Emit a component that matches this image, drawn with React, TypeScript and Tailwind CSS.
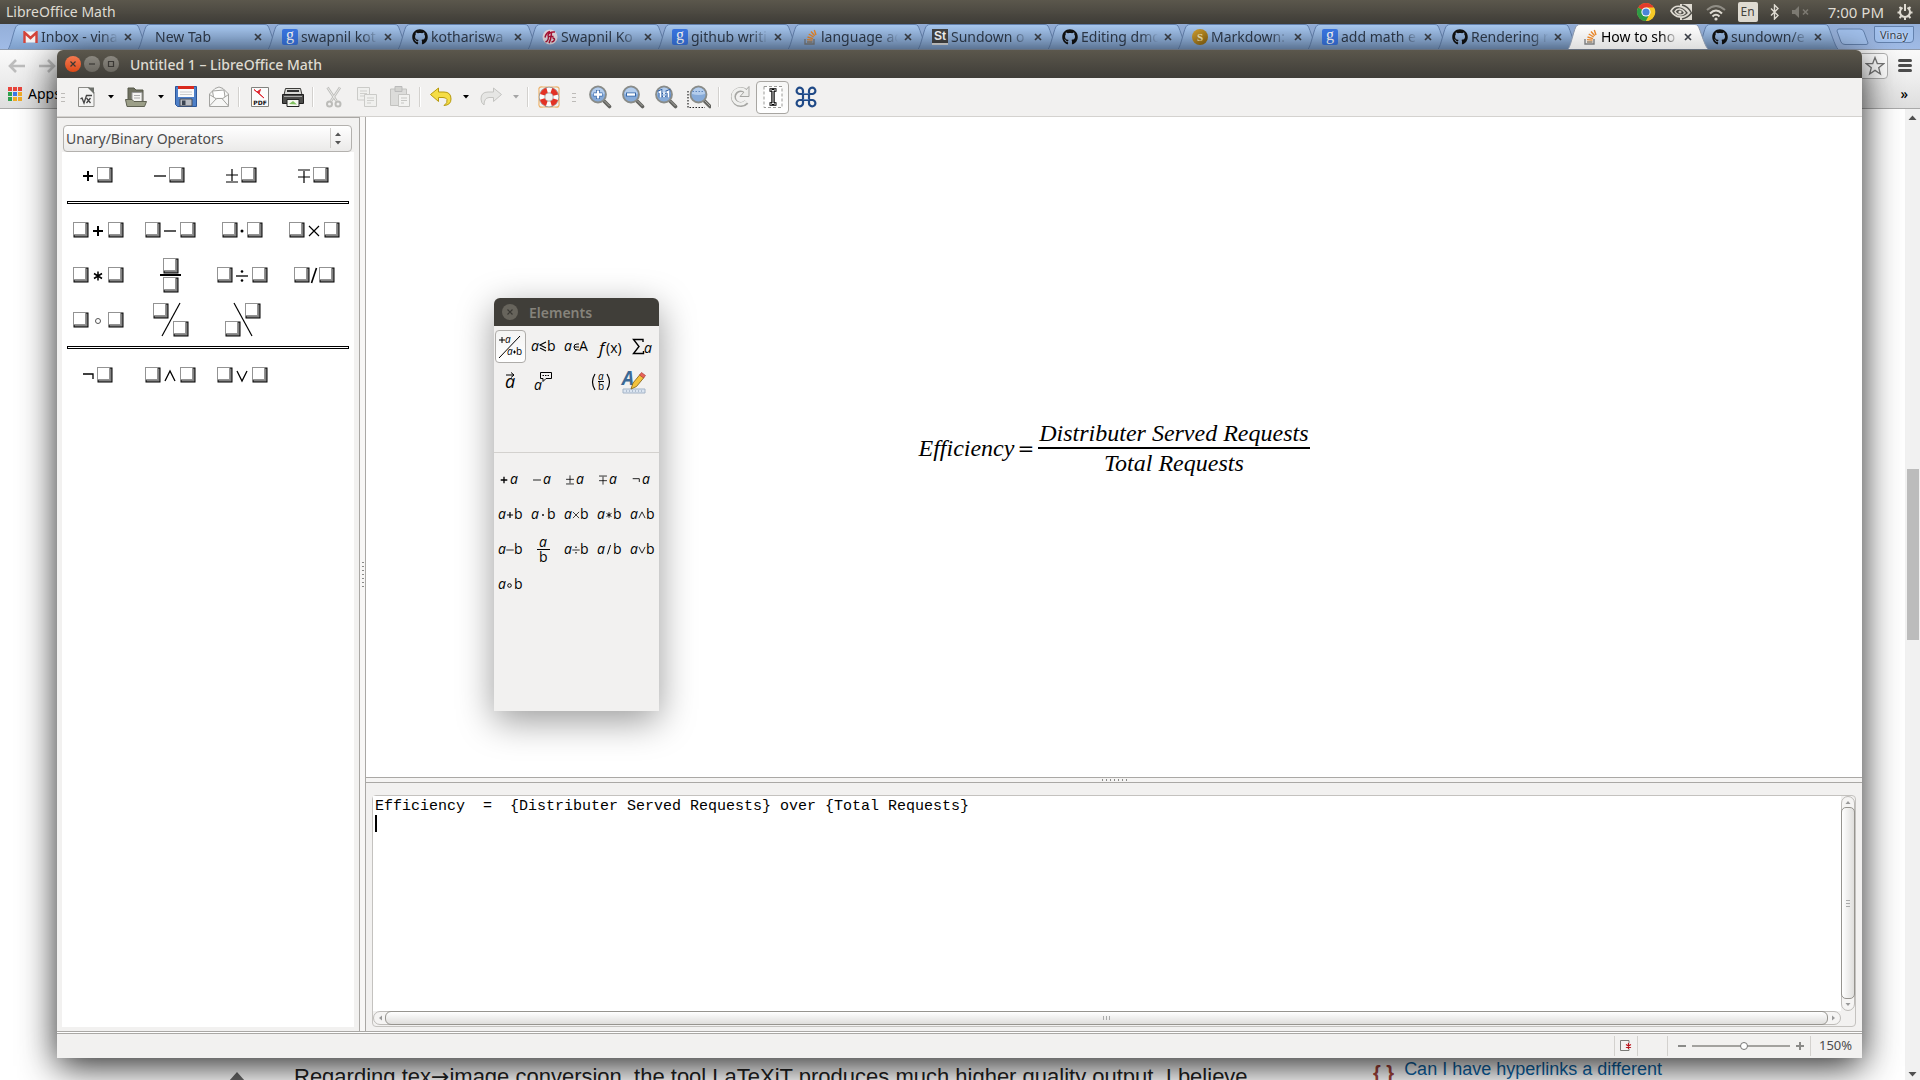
import React from "react";
import { FaGithub } from "react-icons/fa";

const UI = "font-['Noto_Sans',sans-serif]";

/* ---------- desktop panel ---------- */

function ChromeIcon() {
  return (
    <svg width="20" height="20" viewBox="0 0 20 20">
      <circle cx="10" cy="10" r="9" fill="#f7c927" />
      <path d="M10 10 L2.2 5.5 A9 9 0 0 1 17.8 5.5 Z" fill="#e23a2c" />
      <path d="M10 10 L2.2 5.5 A9 9 0 0 0 10 19 L13.5 12.5 Z" fill="#2d9b46" />
      <path d="M10 5.5 L18 5.5 A9 9 0 0 1 10 19 L14 12 Z" fill="#f7c927" />
      <circle cx="10" cy="10" r="4.6" fill="#fff" />
      <circle cx="10" cy="10" r="3.6" fill="#4a84d8" />
    </svg>
  );
}

function NvidiaIcon() {
  return (
    <svg width="24" height="20" viewBox="0 0 24 20" fill="none" stroke="#dfdbd2">
      <path d="M10 2 H22 V18 H10 Z" fill="#dfdbd2" stroke="none" />
      <path d="M1 9 C5 2 13 3 19 11 C14 17 5 16 1 9 Z" fill="#504f49" strokeWidth="1.6" />
      <path d="M12 3 C17 4 20 8 21.500 11 C19 14 16 16 12 17" stroke="#504f49" strokeWidth="1.4" />
      <path d="M5 9.500 C7 6 12 6 15 11 C12 14 7 14 5 9.500 Z" strokeWidth="1.5" />
      <circle cx="10" cy="10" r="1.6" fill="#dfdbd2" stroke="none" />
    </svg>
  );
}

function TopPanel() {
  return (
    <header
      className={`${UI} flex h-6 shrink-0 items-center bg-linear-to-b from-[#5b574c] to-[#3f3d38] px-1.5 text-[14px] leading-6 text-[#dfdbd2]`}
    >
      <span>LibreOffice Math</span>
      <div className="ml-auto flex items-center">
        <button aria-label="Chrome" className="mr-3.5"><ChromeIcon /></button>
        <button aria-label="Graphics" className="mr-3"><NvidiaIcon /></button>
        <button aria-label="Network" className="mr-3">
          <svg width="20" height="18" viewBox="0 0 20 18" fill="none" strokeWidth="2">
            <path d="M1 7 Q10 -1 19 7" stroke="#908d85" />
            <path d="M4 10.500 Q10 4.500 16 10.500" stroke="#dfdbd2" />
            <path d="M6.500 13.500 Q10 10 13.500 13.500" stroke="#dfdbd2" />
            <circle cx="10" cy="16" r="1.600" fill="#dfdbd2" />
          </svg>
        </button>
        <button className="mr-3 h-5 w-5 rounded-xs bg-[#dfdbd2] text-center text-[12px] leading-5 text-[#45433e]">En</button>
        <button aria-label="Bluetooth" className="mr-3">
          <svg width="9" height="16" viewBox="0 0 9 16" fill="none" stroke="#dfdbd2" strokeWidth="1.400">
            <path d="M1 4.500 L8 11.500 L4.500 15 V1 L8 4.500 L1 11.500" />
          </svg>
        </button>
        <button aria-label="Volume" className="mr-[18px]">
          <svg width="19" height="12" viewBox="0 0 19 12">
            <path d="M1 4 H4 L8 0 V12 L4 8 H1 Z" fill="#7d7a72" />
            <path d="M12 3.500 L17 8.500 M17 3.500 L12 8.500" stroke="#7d7a72" strokeWidth="1.600" />
          </svg>
        </button>
        <span className="mr-3 text-[15px]">7:00 PM</span>
        <button aria-label="Session">
          <svg width="18" height="18" viewBox="0 0 18 18" fill="none" stroke="#dfdbd2" strokeWidth="2">
            <path d="M6.500 4.700 A5 5 0 1 0 11.500 4.700" />
            <path d="M9 1 V8" />
            <path d="M1.500 9.500 H4 M14 9.500 H16.500 M3.500 15 L5.500 13 M14.500 15 L12.500 13 M9 14.500 V17 M3.500 4 L5.500 6 M14.500 4 L12.500 6" />
          </svg>
        </button>
      </div>
    </header>
  );
}

/* ---------- browser behind ---------- */

function GoogleIcon() {
  return (
    <span className="flex h-4 w-4 items-center justify-center rounded-xs bg-[#3b78e7] pb-1 font-['Liberation_Serif',serif] text-[16px] leading-4 text-white">
      g
    </span>
  );
}
function SoIcon() {
  return (
    <svg width="15" height="16" viewBox="0 0 15 16" fill="none">
      <path d="M2 10 V15 H11 V10" stroke="#7b7c7e" strokeWidth="1.400" />
      <path d="M4 13 H9.500" stroke="#8d7a62" strokeWidth="1.400" />
      <path d="M4 10.600 L9.500 11.100 M4.500 8 L10 9.600 M5.700 5 L10.700 8 M8 2.500 L11.700 6.800 M11.300 1 L13 6" stroke="#e8872b" strokeWidth="1.400" />
    </svg>
  );
}
const favicons: Record<string, React.ReactNode> = {
  gmail: (
    <svg width="15" height="12" viewBox="0 0 15 12">
      <rect x="1" y="0.500" width="13" height="11" fill="#f4f4f4" />
      <path d="M1.500 12 V1.500 L7.500 7 L13.500 1.500 V12" fill="none" stroke="#d5443a" strokeWidth="2.400" />
    </svg>
  ),
  google: <GoogleIcon />,
  github: <FaGithub size={16} color="#111" />,
  so: <SoIcon />,
  sk: (
    <svg width="16" height="16" viewBox="0 0 16 16">
      <circle cx="8" cy="8" r="7.500" fill="#e9dfe6" />
      <path d="M3.500 13 C6 12 7 9 6 6 C7 3.500 9 2.500 13 3 M3 8.500 C4 4 6 3 8 2.500 M6.500 7.500 H11.500 M9.500 4 C9 8 9 11 7 14 M10.500 9 C13.500 9 13 12.500 9.500 13" fill="none" stroke="#b01236" strokeWidth="1.500" />
    </svg>
  ),
  st: (
    <span className="flex h-4 w-4 items-center justify-center border-b-2 border-[#ddd] bg-[#444] font-['Liberation_Sans',sans-serif] text-[12px] leading-3 font-bold text-white">
      St
    </span>
  ),
  s: (
    <span className="flex h-4 w-4 items-center justify-center rounded-full bg-linear-to-br from-[#d8a531] to-[#8a6410] font-['Liberation_Serif',serif] text-[11px] leading-4 font-bold text-[#f6e6b5]">
      S
    </span>
  ),
};

const tabs = [
  ["gmail", "Inbox - vina"],
  ["", "New Tab"],
  ["google", "swapnil kot"],
  ["github", "kothariswa"],
  ["sk", "Swapnil Ko"],
  ["google", "github writi"],
  ["so", "language ac"],
  ["st", "Sundown o"],
  ["github", "Editing dmq"],
  ["s", "Markdown:"],
  ["google", "add math e"],
  ["github", "Rendering r"],
  ["so", "How to sho"],
  ["github", "sundown/e"],
];

function Tab({ icon, label, active }: { icon: string; label: string; active: boolean }) {
  return (
    <div className={active ? "relative z-10 -mr-2.5 h-[25px] w-[140px] shrink-0" : "relative -mr-2.5 h-[25px] w-[140px] shrink-0"}>
      <svg className="absolute inset-0" width="140" height="25" viewBox="0 0 140 25">
        <defs>
          <linearGradient id="tabIdle" x1="0" y1="0" x2="0" y2="1">
            <stop offset="0" stopColor="#abcbf3" />
            <stop offset="1" stopColor="#7e9fca" />
          </linearGradient>
          <linearGradient id="tabActive" x1="0" y1="0" x2="0" y2="1">
            <stop offset="0" stopColor="#ffffff" />
            <stop offset="1" stopColor="#dedede" />
          </linearGradient>
        </defs>
        <path
          d="M0 25 C3 23 6 3 9 1.500 Q10 0.500 12 0.500 H127 Q129 0.500 130 2 C132 5 137 23 140 25"
          fill={active ? "url(#tabActive)" : "url(#tabIdle)"}
          stroke={active ? "#8a97ab" : "#6482ae"}
        />
      </svg>
      <div className="relative flex h-[25px] items-center pl-3.5 text-[14px]">
        {icon ? <span className="mr-[3px] flex w-4 shrink-0 items-center justify-center">{favicons[icon]}</span> : <span className="w-[3px]" />}
        <button
          className={
            active
              ? "flex-1 overflow-hidden text-left whitespace-nowrap text-black [mask-image:linear-gradient(to_right,black_78%,transparent)]"
              : "flex-1 overflow-hidden text-left whitespace-nowrap text-[#2f3b4c] [mask-image:linear-gradient(to_right,black_78%,transparent)]"
          }
        >
          {label}
        </button>
        <button aria-label={`Close ${label}`} className="mr-4 ml-1.5 h-2 w-2 shrink-0">
          <svg width="8" height="8" viewBox="0 0 8 8" stroke="#3b3f46" strokeWidth="1.700">
            <path d="M1 1 L7 7 M7 1 L1 7" />
          </svg>
        </button>
      </div>
    </div>
  );
}

const appColors = [
  "bg-[#e8453c]", "bg-[#e8453c]", "bg-[#e8453c]",
  "bg-[#2fa14f]", "bg-[#3b78e7]", "bg-[#f0ac27]",
  "bg-[#2fa14f]", "bg-[#f0ac27]", "bg-[#f0ac27]",
];

function Browser() {
  return (
    <div className={`${UI} flex min-h-0 flex-1 flex-col`}>
      <div className="flex h-[25px] shrink-0 items-start bg-linear-to-b from-[#94afd9] to-[#a0bbe6] pl-2">
        {tabs.map(([icon, label], i) => (
          <Tab key={i} icon={icon} label={label} active={i === 12} />
        ))}
        <button aria-label="New tab" className="mt-1 ml-2">
          <svg width="33" height="18" viewBox="0 0 33 18">
            <path d="M3 1 H24 Q27 1 28 4 L32 15 Q32 16.500 30 16.500 H9 Q6 16.500 5 14 L1 3 Q1 1 3 1 Z" fill="#a3c2ee" stroke="#6482ae" />
          </svg>
        </button>
        <button className="mt-0.5 mr-1.5 ml-auto h-[17px] w-10 rounded-b-sm border border-[#6482ae] bg-[#a3c2ee] text-center text-[11px] leading-4 text-[#2f3b4c] [text-shadow:0_0_2px_white]">Vinay</button>
      </div>
      <div className="flex h-8 shrink-0 items-center border-t border-[#8f9bae] bg-linear-to-b from-[#fafafa] to-[#ececec] pr-2 pl-2">
        <button aria-label="Back" className="mr-3">
          <svg width="18" height="14" viewBox="0 0 18 14" fill="none" stroke="#bdbdbd" strokeWidth="2.600"><path d="M8 1 L2 7 L8 13 M2 7 H17" /></svg>
        </button>
        <button aria-label="Forward">
          <svg width="18" height="14" viewBox="0 0 18 14" fill="none" stroke="#bdbdbd" strokeWidth="2.600"><path d="M10 1 L16 7 L10 13 M16 7 H1" /></svg>
        </button>
        <div className="ml-4 flex h-[26px] flex-1 items-center justify-end rounded-sm border border-[#b0b0b0] bg-white pr-0.5">
          <button aria-label="Bookmark">
            <svg width="20" height="20" viewBox="0 0 20 20" fill="none" stroke="#777" strokeWidth="1.300">
              <path d="M10 1.500 L12.300 7.500 L18.600 7.700 L13.700 11.700 L15.400 18 L10 14.400 L4.600 18 L6.300 11.700 L1.400 7.700 L7.700 7.500 Z" />
            </svg>
          </button>
        </div>
        <button aria-label="Menu" className="ml-2.5 flex w-3.5 flex-col gap-0.5">
          <span className="h-[3px] rounded-xs bg-[#4c4c4c]" />
          <span className="h-[3px] rounded-xs bg-[#4c4c4c]" />
          <span className="h-[3px] rounded-xs bg-[#4c4c4c]" />
        </button>
      </div>
      <div className="flex h-[28px] shrink-0 items-center border-b border-[#a9a9a9] bg-linear-to-b from-[#ececec] to-[#dedede] px-2 pb-0.5">
        <button className="flex items-center text-[14px] text-black">
          <span className="mr-1.5 grid grid-cols-3 gap-px">
            {appColors.map((c, i) => <span key={i} className={`${c} h-1 w-1`} />)}
          </span>
          Apps
        </button>
        <button aria-label="More bookmarks" className="ml-auto pr-1 text-[14px] font-medium">»</button>
      </div>
      <div className="flex min-h-0 flex-1 bg-white font-['Liberation_Sans',sans-serif]">
        <div className="flex flex-1 items-end pl-[229px]">
          <div className="h-2 w-4 overflow-hidden">
            <svg width="16" height="16" viewBox="0 0 16 16"><path d="M8 0 L16 9 H0 Z" fill="#666" /></svg>
          </div>
          <p className="ml-[49px] h-[15px] w-[1079px] overflow-visible text-[22px] leading-6 whitespace-nowrap text-[#222]">
            Regarding tex<span className="font-['DejaVu_Sans',sans-serif]">→</span>image conversion, the tool LaTeXiT produces much higher quality output. I believe
          </p>
          <span className="h-[19px] text-[20px] leading-6 font-bold whitespace-nowrap text-[#a5433b]">{"{ }"}</span>
          <a href="#hyperlinks" className="ml-2.5 h-[23px] text-[18px] leading-6 whitespace-nowrap text-[#0b65a8]">
            Can I have hyperlinks a different
          </a>
        </div>
        <div className="flex w-[15px] flex-col items-center bg-[#f1f1f1]">
          <svg width="15" height="16" viewBox="0 0 15 16"><path d="M3.500 11 L7.500 6.500 L11.500 11 Z" fill="#505050" /></svg>
          <div className="h-[344px]" />
          <div className="h-[171px] w-3 bg-[#bcbcbc]" />
          <div className="flex-1" />
          <svg width="15" height="12" viewBox="0 0 15 12"><path d="M3.500 4 L7.500 8.500 L11.500 4 Z" fill="#505050" /></svg>
        </div>
      </div>
    </div>
  );
}

/* ---------- toolbar ---------- */

function Btn({ label, children, pressed }: { label: string; children: React.ReactNode; pressed?: boolean }) {
  return (
    <button
      aria-label={label}
      className={
        pressed
          ? "flex h-[33px] w-[33px] shrink-0 items-center justify-center rounded-sm border border-[#a8a6a2] bg-linear-to-b from-[#f6f6f5] to-white"
          : "flex h-8 w-[33px] shrink-0 items-center justify-center"
      }
    >
      <svg width="24" height="24" viewBox="0 0 24 24" fill="none">{children}</svg>
    </button>
  );
}
function Drop({ faded }: { faded?: boolean }) {
  return (
    <button aria-label="More" className="flex h-8 w-[17px] shrink-0 items-center justify-center">
      <svg width="6" height="4" viewBox="0 0 6 4"><path d="M0 0 H6 L3 3.500 Z" fill={faded ? "#a5a5a5" : "#000"} /></svg>
    </button>
  );
}
function Sep() {
  return <span className="mx-[3px] h-5 w-0.5 shrink-0 border-l border-[#d3d1ce] bg-white" />;
}
function Grip() {
  return (
    <span className="flex w-1 shrink-0 flex-col gap-[3px]">
      <i className="h-px bg-[#bdbbb8]" />
      <i className="h-px bg-[#bdbbb8]" />
      <i className="h-px bg-[#bdbbb8]" />
    </span>
  );
}
function Lens({ children }: { children?: React.ReactNode }) {
  return (
    <>
      <path d="M15.500 15.500 L21.500 21.500" stroke="#63635f" strokeWidth="3.600" strokeLinecap="round" />
      <path d="M16.500 16 L21.500 21" stroke="#a8a8a4" strokeWidth="1" />
      <circle cx="10" cy="9.500" r="8" fill="#86aad8" stroke="#8a8c88" strokeWidth="1.800" />
      <path d="M3.500 9 A6.500 6.500 0 0 1 16.500 9 Q10 11 3.500 9" fill="#b4cdec" />
      {children}
    </>
  );
}

function Toolbar() {
  return (
    <div className="flex h-[39px] shrink-0 items-center border-b border-[#d4d2cf] bg-[#f2f1f0]">
      <div className="flex w-3 shrink-0 justify-center"><Grip /></div>
      <Btn label="New formula">
        <path d="M4.500 2.500 H15 L20 7 V21.500 H4.500 Z" fill="#f4f4f3" stroke="#8c8c88" />
        <path d="M13.500 2.500 H20 V9 Z" fill="#6d706b" />
        <path d="M6.500 14 L8 13 L10 18 L12.500 10.500 H18" stroke="#444" strokeWidth="1.300" />
        <path d="M12.500 13 L16.500 18 M16.500 13 L12.500 18" stroke="#444" strokeWidth="1.300" />
      </Btn>
      <Drop />
      <Btn label="Open">
        <path d="M4 3 H10 L12 5 H19 V16 H4 Z" fill="#6f7160" stroke="#56584a" />
        <path d="M8 7.500 H18 V17 H8 Z" fill="#f4f4f0" stroke="#999" />
        <path d="M10 10.500 H16 M10 13 H16" stroke="#aaa" />
        <path d="M1.500 14.500 H8 L10 16.500 H22.500 L20.500 21.500 H3 Z" fill="#9c9f88" stroke="#5f6152" />
      </Btn>
      <Drop />
      <Btn label="Save">
        <path d="M1.500 1.500 H22.500 V21.500 H3.500 L1.500 19.500 Z" fill="#4d7fc8" stroke="#2c5698" />
        <path d="M4 2 H20 V12 H4 Z" fill="#fafafa" />
        <path d="M4 1 H20 V4 H4 Z" fill="#d9291c" />
        <path d="M6 7 H18 M6 9.500 H18" stroke="#ccc" />
        <path d="M6 14 H18 V21 H6 Z" fill="#b9bcc2" stroke="#4a4f58" />
        <path d="M8 15.500 H11.500 V20 H8 Z" fill="#3a4350" />
      </Btn>
      <Btn label="E-mail">
        <path d="M2.500 9 L8 3.500 Q12 0.500 16 3.500 L21.500 9 V21.500 H2.500 Z" fill="#f7f7f6" stroke="#a3a3a0" />
        <path d="M6.500 12 L5.500 6 L17 5 L18 12" fill="#fff" stroke="#a3a3a0" />
        <path d="M2.500 21 L9.500 13.500 H15 L21.500 21 M2.500 9.500 L9.500 14 M21.500 9.500 L15 14" stroke="#a3a3a0" />
      </Btn>
      <Sep />
      <Btn label="Export as PDF">
        <path d="M3.500 2.500 H20.500 V21.500 H3.500 Z" fill="#fbfbfb" stroke="#82827e" />
        <path d="M6 4.500 L16 13 L11 8.500 L12.500 4.500 L9 7 Z" fill="#e0242e" stroke="#e0242e" />
        <text x="12" y="20" textAnchor="middle" fontSize="6" fontWeight="bold" fontFamily="DejaVu Sans" fill="#111">PDF</text>
      </Btn>
      <Btn label="Print">
        <path d="M4.500 3.500 H19.500 L21 10 H3 Z" fill="#d9d9d6" stroke="#3d3d3a" />
        <path d="M6 6 H18" stroke="#333" strokeWidth="2" />
        <path d="M1.500 9.500 H22.500 V18.500 H1.500 Z" fill="#4c4c4a" stroke="#1f1f1f" />
        <path d="M3 11.500 H21" stroke="#aaa" />
        <path d="M6 14.500 H18 V21.500 H6 Z" fill="#f5f7f0" stroke="#222" />
        <path d="M8 19 L12 16 L16 19.500 Z" fill="#7fc05e" />
      </Btn>
      <Sep />
      <Btn label="Cut">
        <path d="M5.500 2.500 L14.500 16 M18 2.500 L9 16" stroke="#bfbfbc" strokeWidth="2.600" />
        <path d="M5.500 2.500 L14.500 16 M18 2.500 L9 16" stroke="#e9e9e7" strokeWidth="1" />
        <circle cx="7.500" cy="19" r="2.500" stroke="#bcbcb9" strokeWidth="2" />
        <circle cx="16" cy="19" r="2.500" stroke="#bcbcb9" strokeWidth="2" />
      </Btn>
      <Btn label="Copy">
        <path d="M2.500 2.500 H14.500 V15 H2.500 Z" fill="#f0f0ee" stroke="#cbcbc8" />
        <path d="M5 6 H12 M5 8.500 H12 M5 11 H9" stroke="#cfcfcc" />
        <path d="M9.500 9.500 H21.500 V21.500 H9.500 Z" fill="#f0f0ee" stroke="#cbcbc8" />
        <path d="M12 13 H19 M12 15.500 H19 M12 18 H16" stroke="#cfcfcc" />
      </Btn>
      <Btn label="Paste">
        <path d="M2.500 4 H18.500 V20.500 H2.500 Z" fill="#dcdcda" stroke="#c2c2bf" />
        <path d="M7 1.500 H14 V6.500 H7 Z" fill="#d2d2cf" stroke="#bbb" />
        <path d="M10.500 9.500 H21.500 V21.500 H10.500 Z" fill="#f2f2f0" stroke="#c6c6c3" />
        <path d="M13 13 H19 M13 15.500 H19 M13 18 H16" stroke="#c6c6c3" />
      </Btn>
      <Sep />
      <Btn label="Undo">
        <path d="M1.500 9.500 L9.500 3 V7 H15 Q22 7 22 14 Q22 20 15 20.500 Q19 18 18 14.500 Q17 12.500 14 12.500 H9.500 V16.500 Z" fill="#f5dd45" stroke="#b79a0d" strokeLinejoin="round" />
      </Btn>
      <Drop />
      <Btn label="Redo">
        <path d="M22.500 9.500 L14.500 3 V7 H9 Q2 7 2 14 Q2 18 5 20 Q5 13 10 12.500 H14.500 V16.500 Z" fill="#e6e6e4" stroke="#c4c4c1" strokeLinejoin="round" />
      </Btn>
      <Drop faded />
      <Sep />
      <Btn label="Help">
        <path d="M2 6 Q1 1 6 2 H18 Q23 1 22 6 V18 Q23 23 18 22 H6 Q1 23 2 18 Z" stroke="#edb26a" strokeWidth="1.200" />
        <circle cx="12" cy="12" r="7" stroke="#8f8f8f" strokeWidth="6.500" />
        <circle cx="12" cy="12" r="7" stroke="#fbfbfb" strokeWidth="5" />
        <circle cx="12" cy="12" r="7" stroke="#e23225" strokeWidth="5" strokeDasharray="6.600 4.396" strokeDashoffset="-2.200" />
      </Btn>
      <div className="flex w-[18px] shrink-0 justify-center"><Grip /></div>
      <Btn label="Zoom in">
        <Lens><path d="M10 5 V14 M5.500 9.500 H14.500" stroke="#3566a8" strokeWidth="4" /><path d="M10 5.500 V13.500 M6 9.500 H14" stroke="#fff" strokeWidth="2.400" /></Lens>
      </Btn>
      <Btn label="Zoom out">
        <Lens><path d="M5 9.500 H15" stroke="#3566a8" strokeWidth="4" /><path d="M6 9.500 H14" stroke="#fff" strokeWidth="2.400" /></Lens>
      </Btn>
      <Btn label="Zoom 100%">
        <Lens>
          <path d="M4 7.500 L6.500 6.500 V12.500 M12 7.500 L14.500 6.500 V12.500 M10 8 V9 M10 11 V12" stroke="#2f5fa3" strokeWidth="3.600" />
          <path d="M4.500 7.500 L6.500 6.500 V12.500 M12.500 7.500 L14.500 6.500 V12.500 M10 7.500 V9 M10 10.500 V12" stroke="#fff" strokeWidth="1.800" />
        </Lens>
      </Btn>
      <Btn label="Show all">
        <path d="M1 6 V22.500 H18" stroke="#222" strokeWidth="1.200" strokeDasharray="1.500 1.500" />
        <g transform="translate(1.500 0)"><Lens><path d="M4 6.500 H16" stroke="#5f86bd" strokeDasharray="1.500 1.500" /></Lens></g>
      </Btn>
      <Sep />
      <Btn label="Update">
        <path d="M18 6.500 A7.500 7.500 0 1 0 18.500 17" stroke="#a6a6a3" strokeWidth="5" />
        <path d="M21 1.500 V11.500 H12 Z" fill="#ececea" stroke="#a6a6a3" />
        <path d="M18 6.500 A7.500 7.500 0 1 0 18 16.500" stroke="#f0f0ee" strokeWidth="3" />
      </Btn>
      <Btn label="Formula cursor" pressed>
        <path d="M3 1.500 H21 V22.500 H3 Z" stroke="#9a9a97" strokeDasharray="3 2" fill="#fff" />
        <path d="M8.500 5 H11 L12 6 L13 5 H15.500 M8.500 19 H11 L12 18 L13 19 H15.500 M12 5 V19" stroke="#000" strokeWidth="3.400" />
        <path d="M9 5 H11 L12 6 L13 5 H15 M9 19 H11 L12 18 L13 19 H15 M12 5 V19" stroke="#eee" strokeWidth="1" />
      </Btn>
      <Btn label="Catalog">
        <path
          d="M9 6 V18 A3.200 3.200 0 1 1 5.800 15 H18.200 A3.200 3.200 0 1 1 15 18 V6 A3.200 3.200 0 1 1 18.200 9 H5.800 A3.200 3.200 0 1 1 9 6 Z"
          stroke="#204a87"
          strokeWidth="2.200"
        />
        <path d="M9.500 8.500 H14.500 M9.500 14.500 H14.500" stroke="#8fb0dd" strokeWidth="0.700" />
      </Btn>
    </div>
  );
}

/* ---------- operator side panel ---------- */

function Box({ x, y }: { x: number; y: number }) {
  return (
    <g>
      <rect x={x + 1} y={y + 1} width="14" height="14" fill="#828282" />
      <rect x={x + 0.5} y={y + 0.5} width="12" height="12" fill="#fff" stroke="#939393" />
    </g>
  );
}

const opPaths: Record<string, React.ReactNode> = {
  plus: <path d="M-5 0 H5 M0 -5 V5" strokeWidth="2" />,
  minus: <path d="M-6 0 H6" strokeWidth="1.300" />,
  pm: <path d="M-6 -1 H6 M0 -7 V5 M-6 6 H6" strokeWidth="1.200" />,
  mp: <path d="M-6 1 H6 M0 -5 V7 M-6 -6 H6" strokeWidth="1.200" />,
  dot: <circle r="1.500" fill="#000" stroke="none" />,
  times: <path d="M-5 -5 L5 5 M5 -5 L-5 5" strokeWidth="1.200" />,
  ast: <path d="M0 -4.500 V4.500 M-4 -2.500 L4 2.500 M4 -2.500 L-4 2.500" strokeWidth="1.500" />,
  div: <g><path d="M-6 0 H6" strokeWidth="1.300" /><circle cy="-4.500" r="1.300" fill="#000" stroke="none" /><circle cy="4.500" r="1.300" fill="#000" stroke="none" /></g>,
  slash: <path d="M-2.500 7 L2.500 -8" strokeWidth="1.600" />,
  circ: <circle r="2.500" strokeWidth="1" stroke="#555" />,
  neg: <path d="M-5 -2 H5 V3" strokeWidth="1.300" />,
  and: <path d="M-5 5 L0 -5 L5 5" strokeWidth="1.300" />,
  or: <path d="M-5 -5 L0 5 L5 -5" strokeWidth="1.300" />,
};

function Op({ kind }: { kind: string }) {
  const [arity, name] = kind.split(":");
  let body: React.ReactNode;
  if (arity === "u") {
    body = (<><g transform="translate(26 23)">{opPaths[name]}</g><Box x={35} y={14} /></>);
  } else if (arity === "b") {
    body = (<><Box x={11} y={14} /><g transform="translate(36 23)">{opPaths[name]}</g><Box x={46} y={14} /></>);
  } else if (arity === "n") {
    body = (<><Box x={16} y={14} /><g transform="translate(36 23)">{opPaths[name]}</g><Box x={41} y={14} /></>);
  } else if (name === "over") {
    body = (<><Box x={29} y={5} /><path d="M26 22 H47" strokeWidth="2" /><Box x={29} y={24} /></>);
  } else if (name === "wides") {
    body = (<><Box x={19} y={5} /><path d="M28 38 L46 5" strokeWidth="1.200" /><Box x={39} y={23} /></>);
  } else {
    body = (<><Box x={39} y={5} /><path d="M28 5 L46 38" strokeWidth="1.200" /><Box x={19} y={23} /></>);
  }
  return (
    <button aria-label={name}>
      <svg width="72" height="45" viewBox="0 0 72 45" fill="none" stroke="#000">{body}</svg>
    </button>
  );
}

function Rule() {
  return <div className="mx-[5px] mt-[3px] h-[3px] border border-black bg-white" />;
}

function SidePanel() {
  return (
    <aside className="flex w-[303px] shrink-0 flex-col border-t border-r border-[#aaa8a5] bg-[#f2f1f0] px-[5px] pt-[7px] pb-1">
      <div className={`${UI} relative`}>
        <select
          aria-label="Element category"
          className="ml-px block h-[27px] w-[289px] appearance-none rounded-sm border border-[#b3b1ae] bg-linear-to-b from-white to-[#ebeae9] px-0.5 text-[14px] leading-6 text-[#4c4c4c]"
        >
          <option>Unary/Binary Operators</option>
        </select>
        <svg className="pointer-events-none absolute top-[3px] right-2" width="16" height="20" viewBox="0 0 16 20">
          <path d="M0.500 0 V20" stroke="#cfcdca" />
          <path d="M5 8 L8 4.500 L11 8 Z M5 13 L8 16.500 L11 13 Z" fill="#555" />
        </svg>
      </div>
      <div className="flex-1 bg-white">
        <div className="grid grid-cols-[repeat(4,72px)] pt-px">
          {["u:plus", "u:minus", "u:pm", "u:mp"].map((k) => <Op key={k} kind={k} />)}
        </div>
        <Rule />
        <div className="grid grid-cols-[repeat(4,72px)] pt-1">
          {["b:plus", "b:minus", "n:dot", "b:times", "b:ast", "x:over", "b:div", "n:slash", "b:circ", "x:wides", "x:widebs"].map((k) => <Op key={k} kind={k} />)}
        </div>
        <Rule />
        <div className="grid grid-cols-[repeat(4,72px)] pt-1">
          {["u:neg", "b:and", "b:or"].map((k) => <Op key={k} kind={k} />)}
        </div>
      </div>
    </aside>
  );
}

/* ---------- floating Elements palette ---------- */

const A = ({ x, y = 22, s = 14 }: { x: number; y?: number; s?: number }) => (
  <text x={x} y={y} fontSize={s} fontStyle="italic" fontFamily="Open Sans" stroke="none" fill="#000">a</text>
);
const B = ({ x, y = 22, s = 14, c = "b" }: { x: number; y?: number; s?: number; c?: string }) => (
  <text x={x} y={y} fontSize={s} fontFamily="Open Sans" stroke="none" fill="#000">{c}</text>
);
const G = ({ k, x = 16, y = 18 }: { k: string; x?: number; y?: number }) => (
  <g transform={`translate(${x} ${y}) scale(0.62)`} strokeWidth="2">{opPaths[k]}</g>
);
const binary = (k: string) => <><A x={4} /><G k={k} /><B x={20} /></>;
const unary = (k: string) => <><g transform="translate(10 18) scale(0.66)">{opPaths[k]}</g><A x={16} /></>;

function Cell({ label, children, active }: { label: string; children?: React.ReactNode; active?: boolean }) {
  return (
    <button
      aria-label={label}
      className={
        active
          ? "mx-px h-[33px] w-[31px] rounded-sm border border-[#aeaca9] bg-linear-to-b from-[#f4f4f3] to-white"
          : "h-[35px] w-[33px]"
      }
    >
      <svg className={active ? "-mx-0.5 -my-px" : ""} width="33" height="35" viewBox="0 0 33 35" fill="none" stroke="#000">{children}</svg>
    </button>
  );
}

function ElementsPalette() {
  return (
    <section className="absolute top-[248px] left-[437px] w-[165px] rounded-t-md bg-[#f2f1f0] shadow-[0_10px_36px_rgba(0,0,0,0.4)]">
      <div className={`${UI} flex h-7 items-center rounded-t-md bg-[#403e39] pl-2 text-[14px] font-semibold text-[#86837b]`}>
        <button aria-label="Close palette" className="mr-[11px] flex h-4 w-4 items-center justify-center rounded-full bg-[#67645c]">
          <svg width="6" height="6" viewBox="0 0 6 6" stroke="#3a3834" strokeWidth="1.200"><path d="M0.500 0.500 L5.500 5.500 M5.500 0.500 L0.500 5.500" /></svg>
        </button>
        Elements
      </div>
      <div className="h-[127px] border-b border-[#d3d1ce] pt-1">
        <div className="flex">
          <Cell label="Unary/Binary Operators" active>
            <path d="M5 28 L26 6 M5 10 H11 M8 7 V13" />
            <A x={11} y={13} s={10} /><A x={13} y={25} s={10} /><path d="M19 22 H22 M20.500 20.500 V23.500" /><B x={22} y={25} s={10} />
          </Cell>
          <Cell label="Relations"><A x={4} y={21} /><path d="M19 12 L13 15 L19 18 M13 18 L19 21" strokeWidth="1.200" /><B x={20} y={21} /></Cell>
          <Cell label="Set operations"><A x={4} y={21} /><path d="M19 14 H17 Q14 14 14 17 Q14 20 17 20 H19 M14 17 H19" /><B x={19} y={21} c="A" /></Cell>
          <Cell label="Functions">
            <text x="6" y="24" fontSize="17" fontStyle="italic" fontFamily="Open Sans" fill="#000" stroke="none">f</text>
            <text x="13" y="23" fontSize="14" fontFamily="Open Sans" fill="#000" stroke="none">(x)</text>
          </Cell>
          <Cell label="Operators"><path d="M17 12 V9.500 H7.500 L13 16.500 L7.500 23.500 H17.500 V21" strokeWidth="1.400" /><A x={18} y={23} /></Cell>
        </div>
        <div className="flex">
          <Cell label="Attributes"><A x={11} y={23} s={18} /><path d="M12 10 H20 M17 7.500 L20 10 L17 12.500" /></Cell>
          <Cell label="Others"><A x={7} y={25} /><path d="M13.500 7.500 H24.500 V13.500 H19 L16 16.500 V13.500 H13.500 Z" /><path d="M15.500 10.500 H23" strokeDasharray="1.500 1" /></Cell>
          <span className="w-6" />
          <Cell label="Brackets">
            <path d="M11 9 Q6 17 11 25 M23 9 Q28 17 23 25 M14 16.500 H20" strokeWidth="1.200" />
            <A x={14} y={15} s={10} /><B x={14} y={25} s={10} />
          </Cell>
          <Cell label="Formats">
            <path d="M6 24 H28 V28 H6 Z" fill="#dbe5f1" stroke="#a3b3c6" />
            <path d="M9 26 H26" stroke="#8799b0" strokeDasharray="1 2" />
            <text x="5" y="20" fontSize="19" fontWeight="bold" fontStyle="italic" fontFamily="Open Sans" fill="#3b6995" stroke="none">A</text>
            <path d="M14 24 L16 18 L23 9.500 L27 12.500 L19.500 21.500 Z" fill="#f3c23c" stroke="#7d5f12" strokeWidth="0.800" />
            <path d="M22.500 10 L24.500 7.500 L28.500 10.500 L26.500 13 Z" fill="#e8635b" stroke="#a3322b" strokeWidth="0.600" />
          </Cell>
        </div>
      </div>
      <div className="grid h-[258px] grid-cols-5 content-start pt-[9px]">
        <Cell label="plus a">{unary("plus")}</Cell>
        <Cell label="minus a">{unary("minus")}</Cell>
        <Cell label="plus minus a">{unary("pm")}</Cell>
        <Cell label="minus plus a">{unary("mp")}</Cell>
        <Cell label="not a">{unary("neg")}</Cell>
        <Cell label="a plus b">{binary("plus")}</Cell>
        <Cell label="a dot b">{binary("dot")}</Cell>
        <Cell label="a times b">{binary("times")}</Cell>
        <Cell label="a asterisk b">{binary("ast")}</Cell>
        <Cell label="a and b">{binary("and")}</Cell>
        <Cell label="a minus b">{binary("minus")}</Cell>
        <Cell label="a over b"><A x={12} y={15} /><path d="M10 17.500 H23" /><B x={12} y={30} /></Cell>
        <Cell label="a divided by b">{binary("div")}</Cell>
        <Cell label="a slash b">{binary("slash")}</Cell>
        <Cell label="a or b">{binary("or")}</Cell>
        <Cell label="a circle b"><A x={4} /><circle cx="15.500" cy="18.500" r="1.800" /><B x={20} /></Cell>
      </div>
    </section>
  );
}

/* ---------- main window ---------- */

function WinButton({ label, close, d }: { label: string; close?: boolean; d: string }) {
  return (
    <button
      aria-label={label}
      className={
        close
          ? "mr-[3px] flex h-4 w-4 items-center justify-center rounded-full bg-linear-to-b from-[#f3794f] to-[#dd4814]"
          : "mr-[3px] flex h-4 w-4 items-center justify-center rounded-full bg-linear-to-b from-[#8b8880] to-[#6b6861]"
      }
    >
      <svg width="8" height="8" viewBox="0 0 8 8" fill="none" stroke="#3a3834" strokeWidth="1.200"><path d={d} /></svg>
    </button>
  );
}

function Formula() {
  return (
    <div className="flex items-center pt-0.5 font-['Liberation_Serif',serif] text-[24px] leading-7 text-black italic [font-variant-ligatures:none]">
      <span>Efficiency</span>
      <span className="mr-1 ml-[3px] font-['DejaVu_Sans',sans-serif] text-[20px] not-italic">=</span>
      <span className="flex flex-col items-center">
        <span className="border-b-2 border-black px-px leading-7">Distributer Served Requests</span>
        <span className="leading-7">Total Requests</span>
      </span>
    </div>
  );
}

function Editor() {
  return (
    <div className="flex h-[248px] shrink-0 flex-col bg-[#f2f1f0] px-1.5 pt-3 pb-1">
      <div className="flex flex-1 flex-col rounded-sm border border-[#c4c2bf] bg-[#f2f1f0]">
        <div className="flex min-h-0 flex-1">
          <div className="relative flex-1 bg-white">
            <textarea
              aria-label="Formula commands"
              className="block h-full w-full resize-none bg-transparent px-0.5 pt-0.5 font-['Liberation_Mono',monospace] text-[15px] leading-[17px] text-black outline-none"
              defaultValue={"Efficiency  =  {Distributer Served Requests} over {Total Requests}\n"}
            />
            <span className="absolute top-[19px] left-0.5 h-[17px] w-0.5 bg-black" />
          </div>
          <div className="flex w-[14px] flex-col rounded-full border border-[#bdbbb8] bg-[#f5f4f3]">
            <svg width="12" height="10" viewBox="0 0 12 10"><path d="M3.500 7 L6 4 L8.500 7 Z" fill="#999" /></svg>
            <div className="-mx-px flex flex-1 flex-col items-center justify-center gap-0.5 rounded-[5px] border border-[#96948f] bg-linear-to-r from-white to-[#dfdedc]">
              <i className="h-px w-1 bg-[#aaa]" /><i className="h-px w-1 bg-[#aaa]" /><i className="h-px w-1 bg-[#aaa]" />
            </div>
            <svg width="12" height="11" viewBox="0 0 12 11"><path d="M3.500 4 L6 7 L8.500 4 Z" fill="#999" /></svg>
          </div>
        </div>
        <div className="mr-[14px] mb-px flex h-[14px] rounded-full border border-[#bdbbb8] bg-[#f5f4f3]">
          <svg width="11" height="12" viewBox="0 0 11 12"><path d="M8 3.500 L5 6 L8 8.500 Z" fill="#999" /></svg>
          <div className="-my-px flex flex-1 items-center justify-center gap-0.5 rounded-[6px] border border-[#96948f] bg-linear-to-b from-white to-[#dfdedc]">
            <i className="h-1 w-px bg-[#aaa]" /><i className="h-1 w-px bg-[#aaa]" /><i className="h-1 w-px bg-[#aaa]" />
          </div>
          <svg width="12" height="12" viewBox="0 0 12 12"><path d="M4 3.500 L7 6 L4 8.500 Z" fill="#999" /></svg>
        </div>
      </div>
    </div>
  );
}

function StatusBar() {
  return (
    <footer className={`${UI} flex h-6 shrink-0 items-center justify-end bg-[#f2f1f0] text-[13px] text-[#4c4c4c]`}>
      <i className="h-5 w-px bg-[#d3d1ce]" />
      <span className="flex w-[22px] justify-center">
        <svg width="12" height="12" viewBox="0 0 12 12" fill="none">
          <path d="M9 3 V0.500 H0.500 V10.500 H9 V9" stroke="#7a7a76" />
          <path d="M8.500 3 V9 M6 4.500 L11 7.500 M11 4.500 L6 7.500" stroke="#b9141c" strokeWidth="1.200" />
        </svg>
      </span>
      <i className="h-5 w-px bg-[#d3d1ce]" />
      <span className="w-[29px]" />
      <i className="h-5 w-px bg-[#d3d1ce]" />
      <button aria-label="Zoom out" className="ml-2.5 flex h-5 w-2 items-center"><i className="h-0.5 w-2 bg-[#8a8a88]" /></button>
      <input
        type="range"
        aria-label="Zoom"
        defaultValue={53}
        className="mx-1.5 h-2.5 w-[98px] appearance-none bg-[linear-gradient(#a3a29f,#a3a29f)] bg-size-[100%_2px] bg-center bg-no-repeat [&::-webkit-slider-thumb]:h-2 [&::-webkit-slider-thumb]:w-2 [&::-webkit-slider-thumb]:appearance-none [&::-webkit-slider-thumb]:rounded-full [&::-webkit-slider-thumb]:border [&::-webkit-slider-thumb]:border-[#777] [&::-webkit-slider-thumb]:bg-white"
      />
      <button aria-label="Zoom in" className="mr-1.5 flex h-5 w-2 items-center">
        <svg width="8" height="8" viewBox="0 0 8 8" stroke="#8a8a88" strokeWidth="2"><path d="M0 4 H8 M4 0 V8" /></svg>
      </button>
      <i className="h-5 w-px bg-[#d3d1ce]" />
      <span className="w-[51px] pl-2">150%</span>
    </footer>
  );
}

function MathWindow() {
  return (
    <main className="absolute top-[50px] right-[58px] bottom-[22px] left-[57px] flex flex-col rounded-t-md bg-[#f2f1f0] shadow-[0_8px_36px_rgba(0,0,0,0.85)]">
      <div className={`${UI} flex h-7 shrink-0 items-center rounded-t-md bg-linear-to-b from-[#5b574c] to-[#3f3d38] pl-2 text-[14px] font-medium text-[#dfdbd2]`}>
        <WinButton label="Close" close d="M1.500 1.500 L6.500 6.500 M6.500 1.500 L1.500 6.500" />
        <WinButton label="Minimize" d="M1 4 H7" />
        <WinButton label="Maximize" d="M1.500 1.500 H6.500 V6.500 H1.500 Z" />
        <h1 className="ml-2">Untitled 1 – LibreOffice Math</h1>
      </div>
      <Toolbar />
      <div className="flex min-h-0 flex-1 border-b border-[#aaa8a5]">
        <SidePanel />
        <div className="flex w-1.5 shrink-0 flex-col items-center justify-center gap-[3px] border-r border-[#aaa8a5] bg-[#f8f7f6]">
          {[0, 1, 2, 3, 4, 5, 6].map((i) => <i key={i} className="h-px w-0.5 bg-[#8a8a88]" />)}
        </div>
        <div className="flex min-w-0 flex-1 flex-col">
          <div className="flex flex-1 items-center justify-center bg-white"><Formula /></div>
          <div className="flex h-1.5 shrink-0 items-center justify-center gap-[3px] border-y border-[#aaa8a5] bg-[#f5f4f3]">
            {[0, 1, 2, 3, 4, 5, 6].map((i) => <i key={i} className="h-0.5 w-px bg-[#8a8a88]" />)}
          </div>
          <Editor />
        </div>
      </div>
      <div className="h-0.5 shrink-0 border-b border-[#aaa8a5] bg-white" />
      <StatusBar />
      <ElementsPalette />
    </main>
  );
}

export default function App() {
  return (
    <div className="relative flex h-screen w-full flex-col overflow-hidden bg-white">
      <TopPanel />
      <Browser />
      <MathWindow />
    </div>
  );
}
